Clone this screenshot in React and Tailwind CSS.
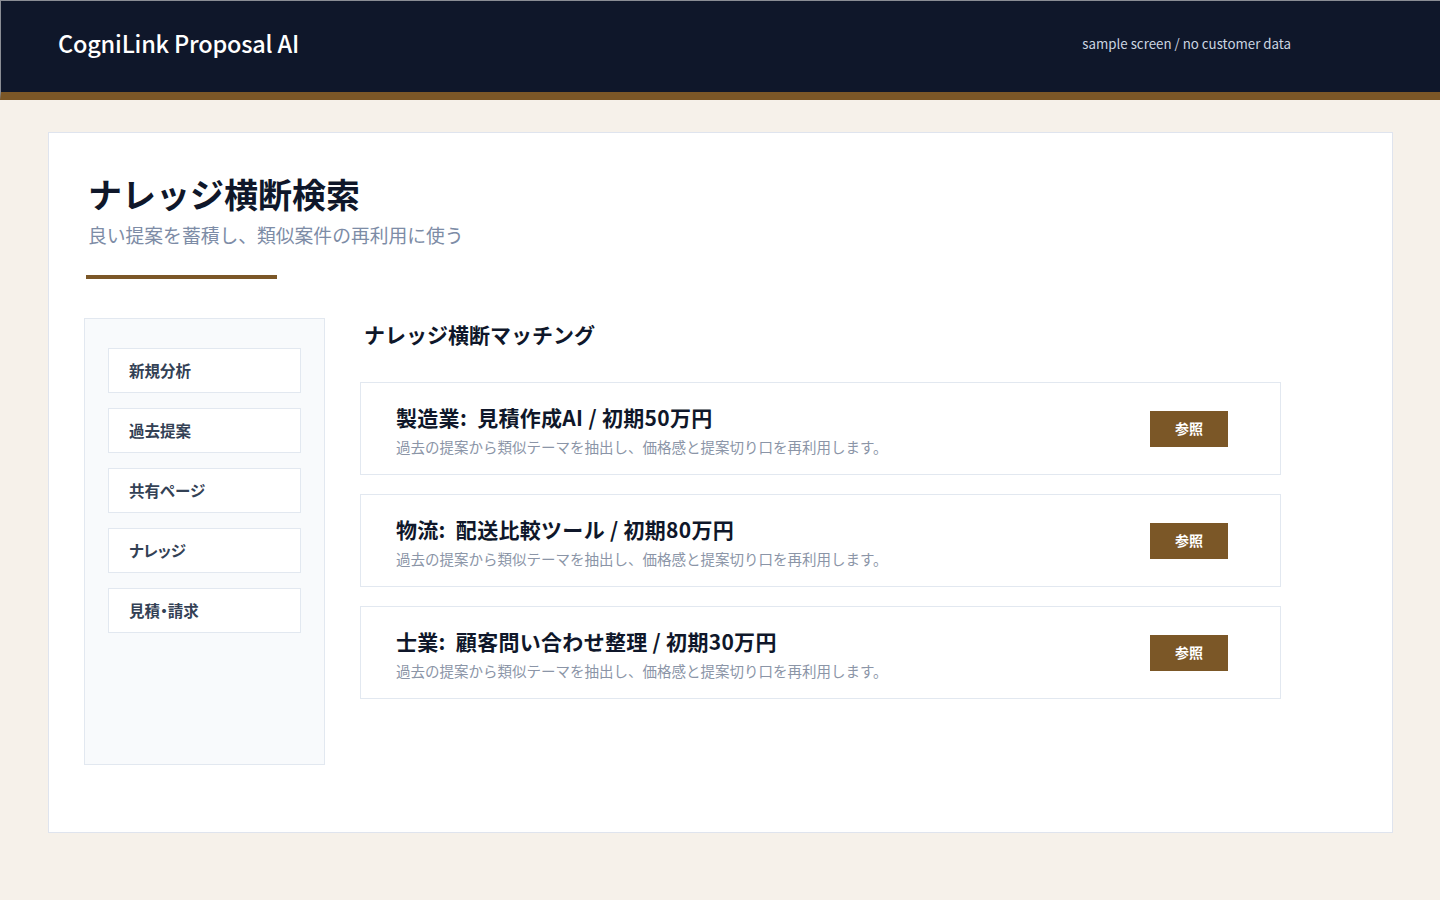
const NAV_ITEMS = ['新規分析', '過去提案', '共有ページ', 'ナレッジ', '見積・請求'];

const MATCHES = [
  { title: '製造業:  見積作成AI / 初期50万円' },
  { title: '物流:  配送比較ツール / 初期80万円' },
  { title: '士業:  顧客問い合わせ整理 / 初期30万円' },
];

const DESC = '過去の提案から類似テーマを抽出し、価格感と提案切り口を再利用します。';

function Header() {
  return (
    <header className="h-[100px] bg-[#0f172a] border-t border-l border-[#8a8d94] border-b-8 border-b-[#7b5727] flex items-center justify-between pb-[6px] pl-[57px] pr-[149px]">
      <h1 className="text-[23.5px] text-white font-medium tracking-[-0.2px]">CogniLink Proposal AI</h1>
      <span className="text-[13.3px] text-[#cbd5e1]">sample screen / no customer data</span>
    </header>
  );
}

function Sidebar() {
  return (
    <aside className="w-[241px] h-[447px] shrink-0 bg-[#f8fafc] border border-[#e2e8f0] pt-[29px] pl-[23px] flex flex-col gap-[15px]">
      {NAV_ITEMS.map((item) => (
        <div
          key={item}
          className="w-[193px] h-[45px] bg-white border border-[#e2e8f0] flex items-center pl-[20px] pt-[1px] text-[15.5px] font-semibold text-[#334155] [font-feature-settings:'palt']"
        >
          {item}
        </div>
      ))}
    </aside>
  );
}

function MatchCard({ title }) {
  return (
    <div className="h-[93px] bg-white border border-[#e2e8f0] flex items-center justify-between pl-[35px] pr-[52px]">
      <div className="pt-[3px]">
        <div className="text-[21px] font-bold text-[#0f172a] leading-[30px] whitespace-pre tracking-[0.3px]">{title}</div>
        <div className="mt-[4px] text-[14.5px] text-[#8b95a7] leading-[22px]">{DESC}</div>
      </div>
      <button className="w-[78px] h-[36px] bg-[#7b5727] text-white text-[14px] font-bold">参照</button>
    </div>
  );
}

export default function App() {
  return (
    <div className="min-h-screen bg-[#f6f1ea] font-['Noto_Sans_CJK_JP','Noto_Sans',sans-serif]">
      <Header />
      <main className="pt-[32px] pl-[48px] pr-[47px] pb-[67px]">
        <section className="bg-white border border-[#dfe4ee] h-[701px] pt-[38px] px-[35px]">
          <div className="pl-[4px]">
            <h2 className="text-[34px] font-bold text-[#0f172a] leading-[46px]">ナレッジ横断検索</h2>
            <p className="mt-[4px] text-[18.8px] text-[#7d8ca6] leading-[28px]">良い提案を蓄積し、類似案件の再利用に使う</p>
          </div>
          <div className="mt-[26px] ml-[2px] w-[191px] h-[4px] bg-[#7b5727]" />

          <div className="mt-[39px] flex gap-[35px]">
            <Sidebar />
            <div className="w-[921px]">
              <h3 className="pl-[4px] pt-[1px] text-[21px] font-bold text-[#0f172a] leading-[30px]">ナレッジ横断マッチング</h3>
              <div className="mt-[33px] flex flex-col gap-[19px]">
                {MATCHES.map((m) => (
                  <MatchCard key={m.title} title={m.title} />
                ))}
              </div>
            </div>
          </div>
        </section>
      </main>
    </div>
  );
}
